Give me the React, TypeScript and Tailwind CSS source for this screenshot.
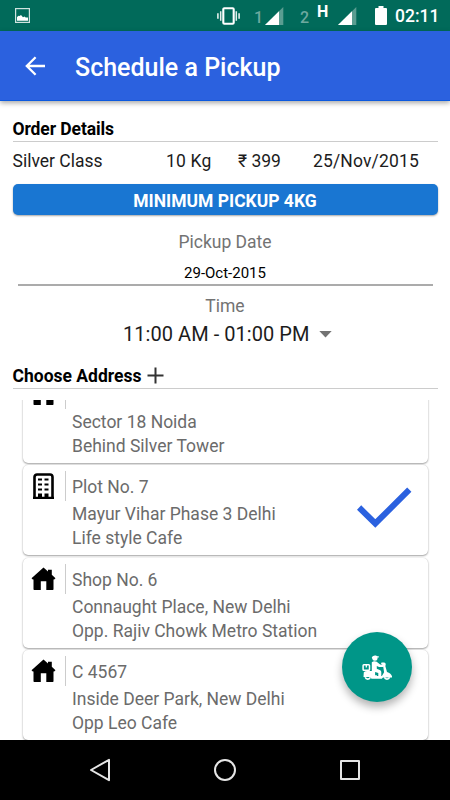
import type { ReactNode } from "react";
import clsx from "clsx";

type AddressKind = "home" | "building";

interface Address {
  id: number;
  kind: AddressKind;
  title?: string;
  lines: string[];
  selected?: boolean;
}

const addresses: Address[] = [
  { id: 1, kind: "home", lines: ["Sector 18 Noida", "Behind Silver Tower"] },
  {
    id: 2,
    kind: "building",
    title: "Plot No. 7",
    lines: ["Mayur Vihar Phase 3 Delhi", "Life style Cafe"],
    selected: true,
  },
  {
    id: 3,
    kind: "home",
    title: "Shop No. 6",
    lines: ["Connaught Place, New Delhi", "Opp. Rajiv Chowk Metro Station"],
  },
  { id: 4, kind: "home", title: "C 4567", lines: ["Inside Deer Park, New Delhi", "Opp Leo Cafe"] },
];

function SignalIcon({ className }: { className?: string }) {
  return (
    <svg className={className} width="19" height="19" viewBox="0 0 19 19">
      <path d="M18.3 0V18H0z" fill="#5a9d91" />
      <path d="M14 4.3V18H0z" fill="#fff" />
    </svg>
  );
}

function StatusBar() {
  return (
    <div className="flex h-[31px] shrink-0 items-start bg-[#016a5a] text-white">
      <svg className="ml-[15px] mt-2" width="15" height="15" viewBox="0 0 15 15">
        <rect x="0.6" y="0.6" width="13.8" height="13.8" fill="none" stroke="#cfe3df" strokeWidth="1.2" />
        <path d="M2 12.7V9l1.600-1.300 1 .3L6 7l2 2.300 1.500-.8 1.200.9 2.300.1v3.200z" fill="#fff" />
      </svg>
      <svg className="ml-[187px] mt-[7px]" width="23" height="18" viewBox="0 0 23 18">
        <rect x="6.3" y="1.3" width="10.4" height="15.4" rx="1" fill="none" stroke="#fff" strokeWidth="2.1" />
        <path d="M3.7 4.2v9.6M19.3 4.2v9.6" stroke="#e2efec" strokeWidth="1.5" />
        <path d="M0.9 6.2v5.6M22.1 6.2v5.6" stroke="#e2efec" strokeWidth="1.6" />
      </svg>
      <span className="ml-[14px] mt-[10px] w-[11px] text-base leading-4 font-medium text-[#6ea99f]">1</span>
      <SignalIcon className="mt-[7px]" />
      <span className="ml-[16px] mt-[10px] w-[17px] text-base leading-4 font-medium text-[#6ea99f]">2</span>
      <span className="mt-[4px] w-[21px] text-base leading-4 font-bold">H</span>
      <SignalIcon className="mt-[7px]" />
      <svg className="ml-[18px] mt-[6px]" width="12" height="19" viewBox="0 0 12 19">
        <path d="M3.5 0h5v2H11a1 1 0 0 1 1 1v15a1 1 0 0 1-1 1H1a1 1 0 0 1-1-1V3a1 1 0 0 1 1-1h2.500z" fill="#fff" />
      </svg>
      <span className="ml-2 mt-[6px] text-[17.5px] leading-5 font-medium">02:11</span>
    </div>
  );
}

function AppBar() {
  return (
    <header className="relative z-10 flex h-[70px] shrink-0 items-center border-b border-[#0b59df] bg-[#2b61df] text-white shadow-[0_2px_5px_rgba(0,0,0,0.35)]">
      <svg className="ml-[25px]" width="21" height="20" viewBox="0 0 21 20">
        <path d="M20 10H2M10.600 1.200L1.800 10l8.800 8.800" fill="none" stroke="#fff" strokeWidth="2.300" />
      </svg>
      <h1 className="ml-[29px] mt-[5px] text-[25px] leading-8 font-medium">Schedule a Pickup</h1>
    </header>
  );
}

function SectionTitle({ children, className }: { children: ReactNode; className?: string }) {
  return (
    <h2
      className={clsx(
        "mx-[12.500px] flex shrink-0 items-center border-b border-[#cccccc] text-[17.5px] leading-5 font-bold text-black",
        className
      )}
    >
      {children}
    </h2>
  );
}

function HomeIcon() {
  return (
    <svg width="25" height="24" viewBox="0 0 25 24">
      <path
        d="M12.500 0.500L17 4.400V2.800H20.800V7.800L24.500 11.200L23.200 12.500H22.500V22.300Q22.500 23 21.800 23H15.300V14.300H9.800V23H3.200Q2.500 23 2.500 22.300V12.500H1.800L0.500 11.200z"
        fill="#000"
      />
    </svg>
  );
}

function BuildingIcon() {
  return (
    <svg width="21" height="26" viewBox="0 0 21 26">
      <path d="M1.500 24.500V4a2.500 2.500 0 0 1 2.500-2.500h13a2.500 2.500 0 0 1 2.500 2.500v20.500" fill="none" stroke="#000" strokeWidth="2.600" />
      <path
        d="M5 5.500h4v2H5zM11.500 5.500h4v2h-4zM5 10.500h4v2H5zM11.500 10.500h4v2h-4zM5 15.500h4v2H5zM11.500 15.500h4v2h-4zM5 20.500h4v4H5zM11.500 20.500h4v4h-4zM0 23.700h21V26H0z"
        fill="#000"
      />
    </svg>
  );
}

function AddressCard({ address }: { address: Address }) {
  return (
    <li className="flex h-[90px] shrink-0 rounded-[5px] bg-white shadow-[0_1px_2px_rgba(0,0,0,0.36),0_0_1px_rgba(0,0,0,0.18)]">
      <div className="flex h-[36px] w-[42px] items-end justify-center">
        {address.kind === "home" ? (
          <div className="pb-[3px]">
            <HomeIcon />
          </div>
        ) : (
          <div className="pb-[2px]">
            <BuildingIcon />
          </div>
        )}
      </div>
      <div className="mt-[6px] h-[30px] w-px bg-[#cccccc]" />
      <div className="ml-[6.500px] flex-1 text-[17.5px] text-[#6b6b6b]">
        <p className="mt-[10px] mb-[3px] h-6 leading-6">{address.title}</p>
        {address.lines.map((line) => (
          <p key={line} className="leading-[24px]">
            {line}
          </p>
        ))}
      </div>
      {address.selected ? (
        <svg className="mr-[16px] mt-[22px]" width="55" height="42" viewBox="0 0 55 42">
          <path d="M2.100 20.500L18.300 36.500L52.300 2.700" fill="none" stroke="#2b61df" strokeWidth="6" />
        </svg>
      ) : null}
    </li>
  );
}

function ScooterIcon() {
  return (
    <svg className="mt-[2px]" width="30" height="27" viewBox="0 0 30 27" fill="none">
      <path d="M9.800 2.800a3.200 2.700 0 0 1 4-2.300l1.700.7 1.300 0v1.200h-1.300v1a2.600 2.200 0 0 1-5.200.3z" fill="#fff" />
      <path
        d="M9.800 7.200q2.400-1.900 4.900-.4l3.400 2.800 3.500.5v2l-4.600-.1-2.200-1.100v2.900l2.900 1.200q1.600.6 1.600 2v5.100h-3v-4.200l-3.200-.8v4H9.800z"
        fill="#fff"
      />
      <rect x="1.100" y="9.700" width="6.400" height="5.600" rx="0.800" stroke="#fff" strokeWidth="1.500" />
      <path d="M4.300 10v2.400" stroke="#fff" strokeWidth="1.300" />
      <path
        d="M1.800 17.300q1.500-1.500 4-1.300h5.800l1 4.300h2.300v.8h5l2.200-3.800-1.100-7.100-2-1.300.5-1.500h2.900l1.400 1.300-.4 2.600 1.600 5.600q4.200 1.200 5 4.400v1.200H21l-1.200 1.200H9.500L8.300 22H1.500z"
        fill="#fff"
      />
      <path d="M3.200 22.300a2.800 2.800 0 0 0 5.200 0M22.400 22.300a2.800 2.800 0 0 0 5.200 0" stroke="#fff" strokeWidth="1.700" />
    </svg>
  );
}

function NavBar() {
  return (
    <nav className="flex h-[60px] shrink-0 items-center bg-black">
      <svg className="ml-[89px]" width="22" height="24" viewBox="0 0 22 24">
        <path d="M20 1.800V22.200L2 12z" fill="none" stroke="#e6e6e6" strokeWidth="2" strokeLinejoin="round" />
      </svg>
      <div className="ml-[103px] size-[22px] rounded-full border-2 border-[#e6e6e6]" />
      <div className="ml-[104px] size-[20px] rounded-[1px] border-2 border-[#e6e6e6]" />
    </nav>
  );
}

export default function App() {
  return (
    <div className="relative flex h-[800px] w-[450px] flex-col overflow-hidden bg-white font-[Roboto,sans-serif]">
      <StatusBar />
      <AppBar />
      <main className="flex h-[639px] flex-col">
        <SectionTitle className="mt-[16px] h-[25px] tracking-[-0.1px]">Order Details</SectionTitle>
        <div className="ml-[12.500px] mt-[9px] flex shrink-0 text-[17.5px] leading-5 text-[#1c1c1c]">
          <span className="w-[153.500px]">Silver Class</span>
          <span className="w-[72px] tracking-[0.2px]">10 Kg</span>
          <span className="w-[75px]">₹ 399</span>
          <span className="tracking-[0.15px]">25/Nov/2015</span>
        </div>
        <button className="mx-[12.500px] mt-[13px] h-[31px] shrink-0 rounded-[5px] bg-[#1976d2] pt-[3px] text-[17.5px] leading-5 font-bold text-white shadow-[0_1px_2px_rgba(0,0,0,0.35)]">
          MINIMUM PICKUP 4KG
        </button>
        <p className="mt-[17px] text-center text-[17.5px] leading-5 text-[#737373]">Pickup Date</p>
        <div className="mx-[17.500px] mt-[9px] h-[25px] shrink-0 border-b-2 border-[#ababab] pt-[2px] text-center text-[15px] leading-5 text-black">
          29-Oct-2015
        </div>
        <p className="mt-[10px] text-center text-[17.500px] leading-5 text-[#737373]">Time</p>
        <div className="ml-[123px] mt-[6px] flex shrink-0 items-center text-[20px] leading-6 text-[#1c1c1c]">
          <span className="tracking-[0.050px]">11:00 AM - 01:00 PM</span>
          <svg className="ml-[9px]" width="13" height="7" viewBox="0 0 13 7">
            <path d="M0.300 0H12.700L6.500 6.500z" fill="#737373" />
          </svg>
        </div>
        <SectionTitle className="mt-[17px] h-[26px]">
          Choose Address
          <svg className="-mt-[1px] ml-[6px]" width="17" height="17" viewBox="0 0 17 17">
            <path d="M8.500 0.500v16M0.500 8.500h16" stroke="#333" strokeWidth="2" />
          </svg>
        </SectionTitle>
        {/* the list is scrolled a little, so the first card is cut off */}
        <div className="mt-[11px] h-[340px] shrink-0 overflow-hidden">
          <ul className="mx-[22.500px] mt-[-27.500px] flex flex-col gap-[2.500px]">
            {addresses.map((address) => (
              <AddressCard key={address.id} address={address} />
            ))}
          </ul>
        </div>
      </main>
      <NavBar />
      <button className="absolute left-[342px] top-[632px] flex size-[70px] items-center justify-center rounded-full bg-[#009688] shadow-[0_5px_8px_rgba(0,0,0,0.3)]">
        <ScooterIcon />
      </button>
    </div>
  );
}
